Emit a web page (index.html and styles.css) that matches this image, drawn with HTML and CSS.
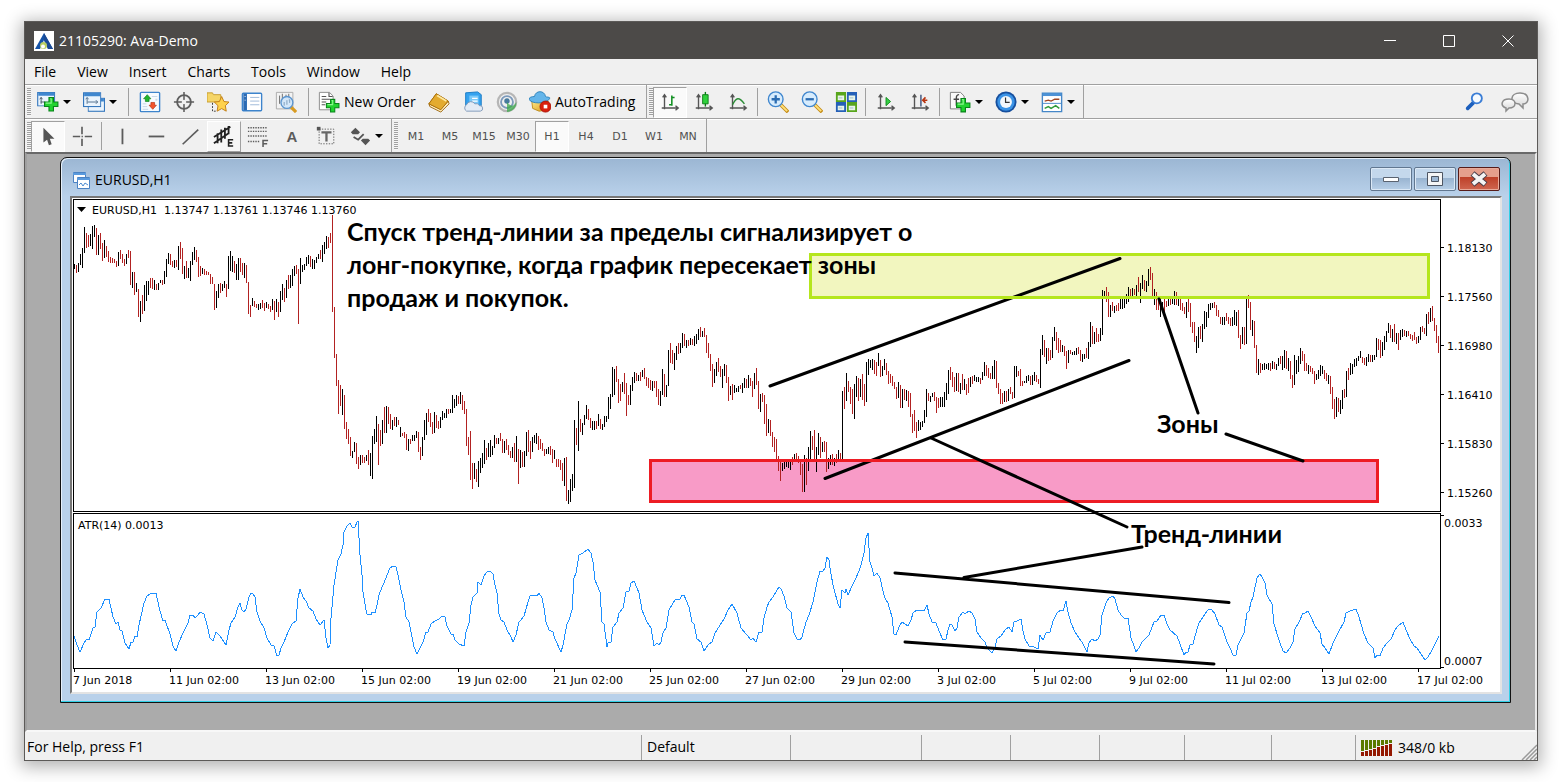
FILE: index.html
```html
<!DOCTYPE html>
<html lang="en">
<head>
<meta charset="utf-8">
<title>21105290: Ava-Demo</title>
<link rel="stylesheet" href="styles.css">
</head>
<body>
<svg class="defs" aria-hidden="true">
  <defs>
    <linearGradient id="gGold" x1="0" y1="0" x2="1" y2="1"><stop offset="0" stop-color="#ffe98a"/><stop offset="1" stop-color="#d99a17"/></linearGradient>
    <linearGradient id="gWhite" x1="0" y1="0" x2="0" y2="1"><stop offset="0" stop-color="#ffffff"/><stop offset="1" stop-color="#d5d5d5"/></linearGradient>
    <symbol id="plus" viewBox="0 0 14 14"><path d="M5 1h4v4h4v4H9v4H5V9H1V5h4z" fill="#22d32f" stroke="#08851a"/><path d="M6 2h1v4H2" fill="none" stroke="#8df58f"/></symbol>
    <symbol id="axes" viewBox="0 0 24 24"><path d="M6 20V5M3 18.500h17M4 7l2-3 2 3M18 16l3 2.500-3 2.500" fill="none" stroke="#555" stroke-width="1.500"/></symbol>
    <symbol id="win" viewBox="0 0 16 13"><rect x=".5" y=".5" width="15" height="12" fill="#eaf4fd" stroke="#3577bd"/><path d="M1 2h14" stroke="#3f87cf" stroke-width="3"/></symbol>
  </defs>
</svg>

<div class="window">
  <header class="titlebar">
    <svg class="app-icon" viewBox="0 0 20 20"><path fill="#fff" d="M0 0h20v20H0z"/><path fill="#1553a8" d="M10 2l9 16h-5L10 9l-4 9H1z"/><path fill="#1b4a94" d="M10 2l9 16h-5L10 9z"/><circle cx="9.500" cy="14.500" r="3.500" fill="#b8cf62"/><circle cx="9" cy="15.500" r="2" fill="#fff"/></svg>
    <h1 class="title">21105290: Ava-Demo</h1>
    <button class="caption" aria-label="Minimize"><svg viewBox="0 0 12 12"><path d="M0 5.500h12"/></svg></button>
    <button class="caption" aria-label="Maximize"><svg viewBox="0 0 12 12"><path d="M.5.500h11v11H.5z"/></svg></button>
    <button class="caption" aria-label="Close"><svg viewBox="0 0 12 12"><path d="M.5.500l11 11m0-11l-11 11"/></svg></button>
  </header>

  <nav class="menubar">
    <button>File</button><button>View</button><button>Insert</button><button>Charts</button><button>Tools</button><button>Window</button><button>Help</button>
  </nav>

  <div class="toolrow">
    <div class="toolbar first">
      <span class="grip"></span>
      <button class="tool split" aria-label="New chart"><svg class="icon" viewBox="0 0 24 24"><use href="#win" x="0" y="1" width="20" height="16"/><path d="M4.500 14V7m-1.500 2l1.500-2 1.500 2M4 12h5" fill="none" stroke="#456"/><use href="#plus" x="7" y="6" width="17" height="17"/></svg><i class="drop"></i></button>
      <button class="tool split" aria-label="Profiles"><svg class="icon" viewBox="0 0 24 24"><use href="#win" x="5" y="7" width="19" height="16"/><use href="#win" x="0" y="1" width="20" height="17"/><path d="M4.500 14V8M3 9l1.500-2L6 9M5 12h11m-2-2l2 2-2 2" fill="none" stroke="#4c6a88"/></svg><i class="drop"></i></button>
      <span class="sep"></span>
      <button class="tool" aria-label="Market watch"><svg class="icon" viewBox="0 0 24 24"><rect x="1.500" y="1.500" width="21" height="21" rx="1" fill="#f6fbff" stroke="#3d84cc" stroke-width="1.500"/><path d="M14 6h6M4 14h4m10-4h2M4 17h5m9-8h2M4 20h6" stroke="#c3d4e4"/><path d="M9 4l4 4.500h-2v3H7v-3H5z" fill="#20b52c" stroke="#0c7a17" stroke-width=".7"/><path d="M15 20l-4-4.500h2v-3h4v3h2z" fill="#f4542b" stroke="#b22c0c" stroke-width=".7"/></svg></button>
      <button class="tool" aria-label="Data window"><svg class="icon" viewBox="0 0 24 24" fill="none" stroke="#5e5e5e"><circle cx="12" cy="12" r="7.500" stroke-width="2"/><path d="M12 1v22M1 12h22" stroke-width="1.700"/><circle cx="12" cy="12" r="2.500" fill="#f0f0f0" stroke="none"/></svg></button>
      <button class="tool" aria-label="Navigator"><svg class="icon" viewBox="0 0 24 24"><path d="M0 2h6l1 2h8v8H0z" fill="#f5d567" stroke="#c59a2c"/><path d="M6 13v9h5" fill="none" stroke="#333" stroke-dasharray="2 1.500"/><path d="M16 6l2.500 5.500 5.500.600-4 3.900 1 6-5-2.800L11 22l1-6-4-3.900 5.500-.600z" fill="#ffd24d" stroke="#c07a10"/></svg></button>
      <button class="tool" aria-label="Terminal"><svg class="icon" viewBox="0 0 24 24"><rect x="1.500" y="2.500" width="21" height="19" rx="1" fill="#fff" stroke="#3d84cc" stroke-width="1.500"/><path d="M4.500 3v18" stroke="#2c6bb4" stroke-width="4"/><path d="M10 7h10M10 11h10M10 15h10" stroke="#9ab6d6"/><path d="M4 6h1M4 10h1" stroke="#fff"/></svg></button>
      <button class="tool" aria-label="Strategy tester"><svg class="icon" viewBox="0 0 24 24"><path d="M1.500 1.500h18v18h-18z" fill="#f3f3f3" stroke="#aaa"/><path d="M5 5v9m3-11v9m7-9v8m-3-7v4" stroke="#666"/><path d="M17 17l6 6" stroke="#d89b22" stroke-width="3.500"/><circle cx="13" cy="12.500" r="6.500" fill="#cfe6fb" fill-opacity=".9" stroke="#5b95cf" stroke-width="1.500"/><path d="M10 12v4m3-6v5m3-6v4" stroke="#7b99b8"/></svg></button>
      <span class="sep"></span>
      <button class="tool wide order"><svg class="icon" viewBox="0 0 24 24"><path d="M1.500 1.500h11l4 4v15h-15z" fill="#fff" stroke="#888"/><path d="M12 2v4h4M4 6h5M4 9h9M4 12h5M4 15h4" fill="none" stroke="#555" stroke-width="1.200"/><use href="#plus" x="8" y="8" width="16" height="16"/></svg>New Order</button>
      <button class="tool" aria-label="MetaEditor"><svg class="icon" viewBox="0 0 24 24"><path d="M1 14L9 3l13 8-8 10z" fill="url(#gGold)" stroke="#a86f0a"/><path d="M1 14l1 3 12 6 9-9-1-3-8 9z" fill="#fff0c2" stroke="#9b640a"/><path d="M1 14l13 6.500 8-9.500L9 3z" fill="#e3ab2f" stroke="#a86f0a"/><path d="M10 5l10 6" stroke="#ffeaa0" stroke-width="2"/></svg></button>
      <button class="tool" aria-label="VPS"><svg class="icon" viewBox="0 0 24 24"><path d="M4 2l13-1 4 3v12H4z" fill="#36a3ef" stroke="#1678c4"/><path d="M8 5h10v9H8z" fill="#7ccaf9"/><path d="M11 8h6m-6 3h6" stroke="#fff" stroke-width="1.500"/><path d="M5 22a4 4 0 010-7 5 5 0 019-1 4 4 0 015 2 3 3 0 011 6z" fill="#e3ebf5" stroke="#7f97b7"/></svg></button>
      <button class="tool" aria-label="Signals"><svg class="icon" viewBox="0 0 24 24" fill="none"><circle cx="12" cy="12" r="10" stroke="#b6b6b6" stroke-width="2.500"/><circle cx="12" cy="12" r="6.500" stroke="#7d9abb" stroke-width="2"/><circle cx="12" cy="11" r="3" fill="#477a9e"/><path d="M12 12v11c7-1 11-6 10-11-2 5-6 6-10 0z" fill="#3ba84a" fill-opacity=".75"/></svg></button>
      <button class="tool wide auto"><svg class="icon" viewBox="0 0 24 24"><path d="M3 11h18l-3 10-7 1-7-3z" fill="url(#gGold)" stroke="#bc8b1f"/><path d="M0 9c2 5 18 6 23-1-1-2-4-1-5-2-1-7-11-7-12 0-3 0-6 1-6 3z" fill="#64b5ea" stroke="#287fb9"/><circle cx="18" cy="17" r="6" fill="#d9200e" stroke="#a91205"/><path d="M16 15h4v4h-4z" fill="#fff"/></svg>AutoTrading</button>
    </div>
    <div class="toolbar">
      <span class="grip"></span>
      <button class="tool pressed" aria-label="Bar chart"><svg class="icon" viewBox="0 0 24 24"><use href="#axes"/><path d="M14 5v11m0-9h3m-6 8h3" fill="none" stroke="#119022" stroke-width="1.700"/></svg></button>
      <button class="tool" aria-label="Candlesticks"><svg class="icon" viewBox="0 0 24 24"><use href="#axes"/><path d="M13.500 1v16" stroke="#0d7b18" stroke-width="1.500"/><path d="M10.500 4h6v10h-6z" fill="#2fd23c" stroke="#0d7b18"/></svg></button>
      <button class="tool" aria-label="Line chart"><svg class="icon" viewBox="0 0 24 24"><use href="#axes"/><path d="M6 15c4-8 7-9 13-1" fill="none" stroke="#2b8c36" stroke-width="1.500"/></svg></button>
      <span class="sep"></span>
      <button class="tool" aria-label="Zoom in"><svg class="icon" viewBox="0 0 24 24"><path d="M15 15l8 8" stroke="#c58c16" stroke-width="4"/><path d="M15 15l7 7" stroke="#ffe07a" stroke-width="2"/><circle cx="9.500" cy="9" r="8" fill="#d7ecfd" stroke="#3f86ce" stroke-width="1.500"/><path d="M9.500 4.500v9m-4.500-4.500h9" stroke="#2b6cb2" stroke-width="2.500"/></svg></button>
      <button class="tool" aria-label="Zoom out"><svg class="icon" viewBox="0 0 24 24"><path d="M15 15l8 8" stroke="#c58c16" stroke-width="4"/><path d="M15 15l7 7" stroke="#ffe07a" stroke-width="2"/><circle cx="9.500" cy="9" r="8" fill="#d7ecfd" stroke="#3f86ce" stroke-width="1.500"/><path d="M5 9h9" stroke="#2b6cb2" stroke-width="2.500"/></svg></button>
      <button class="tool" aria-label="Tile windows"><svg class="icon" viewBox="0 0 24 24"><path d="M1 1h11v11H1zm12 11h11v11H13z" fill="#58a51c"/><path d="M13 1h11v11H13zM1 12h11v11H1z" fill="#2560b8"/><path d="M3 5h7v5H3zm12 0h7v5h-7zM3 16h7v5H3zm12 0h7v5h-7z" fill="#e9f5e9"/><path d="M4 7.500h4m8 0h4M4 18.500h4m8 0h4" stroke="#9bb8c8"/></svg></button>
      <span class="sep"></span>
      <button class="tool" aria-label="Auto scroll"><svg class="icon" viewBox="0 0 24 24"><use href="#axes"/><path d="M12 7v9l5-4.500z" fill="#35cf43" stroke="#0f8a1c"/></svg></button>
      <button class="tool" aria-label="Chart shift"><svg class="icon" viewBox="0 0 24 24"><use href="#axes"/><path d="M13 4v13" stroke="#4d5f86" stroke-width="1.700"/><path d="M20 10h-5m3-3l-3 3 3 3" fill="none" stroke="#b8330f" stroke-width="1.700"/></svg></button>
      <span class="sep"></span>
      <button class="tool split" aria-label="Indicators"><svg class="icon" viewBox="0 0 24 24"><path d="M1.500 1.500h11l4 4v14h-15z" fill="#fafafa" stroke="#777"/><path d="M11 4C8 4 8 6 8 9v7M5 9h6" fill="none" stroke="#444" stroke-width="1.500"/><use href="#plus" x="7" y="7" width="17" height="17"/></svg><i class="drop"></i></button>
      <button class="tool split" aria-label="Periods"><svg class="icon" viewBox="0 0 24 24"><circle cx="12" cy="12" r="11.500" fill="#164f9e"/><circle cx="12" cy="12" r="9.500" fill="#3b93e6"/><circle cx="12" cy="12" r="6.500" fill="#f4f8fc"/><path d="M11.500 7v5.500H16" fill="none" stroke="#333" stroke-width="1.300"/></svg><i class="drop"></i></button>
      <button class="tool split" aria-label="Templates"><svg class="icon" viewBox="0 0 24 24"><path d="M1.500 2.500h21v20h-21z" fill="#fff" stroke="#4587c8" stroke-width="1.500"/><path d="M2 4h20" stroke="#4d92d6" stroke-width="3"/><path d="M4 11l4-1 3 1 4-2h5" fill="none" stroke="#a04422" stroke-width="1.500"/><path d="M2 13.500h20" stroke="#4587c8"/><path d="M4 19l4-2 3 2 5-3 4 3" fill="none" stroke="#2f9a38" stroke-width="1.500"/></svg><i class="drop"></i></button>
    </div>
    <div class="corner">
      <button class="tool" aria-label="Search"><svg class="icon" viewBox="0 0 24 24"><path d="M10 13l-6 6" stroke="#1c5fbd" stroke-width="4" stroke-linecap="round"/><circle cx="14" cy="8" r="5.500" fill="#f6fbff" stroke="#3a7dd6" stroke-width="2"/></svg></button>
      <button class="tool chat" aria-label="Chat"><svg class="bubble" viewBox="0 0 28 22"><path d="M19 2c10 0 10 11 3 11v4l-4-4C8 12 9 2 19 2z" fill="url(#gWhite)" stroke="#8c8c8c" stroke-width="1.500"/><path d="M8 8c8 0 8 9 0 9l-3 3v-3C-1 15 0 8 8 8z" fill="url(#gWhite)" stroke="#8c8c8c" stroke-width="1.500"/></svg></button>
    </div>
  </div>

  <div class="toolrow">
    <div class="toolbar">
      <span class="grip"></span>
      <button class="tool pressed" aria-label="Cursor"><svg class="icon" viewBox="0 0 24 24"><path d="M7 3v16l4-3 2 6 3-1-2-6h5z" fill="#555"/></svg></button>
      <button class="tool" aria-label="Crosshair"><svg class="icon" viewBox="0 0 24 24"><path d="M12 2v8m0 5v8M2 12.500h8m5 0h8" stroke="#5c5c5c" stroke-width="1.800"/><path d="M11.500 12.500h1.500" stroke="#5c5c5c" stroke-width="1.500"/></svg></button>
      <span class="sep"></span>
      <button class="tool" aria-label="Vertical line"><svg class="icon" viewBox="0 0 24 24"><path d="M12.500 4v17" stroke="#5c5c5c" stroke-width="2"/></svg></button>
      <button class="tool" aria-label="Horizontal line"><svg class="icon" viewBox="0 0 24 24"><path d="M4 12.500h17" stroke="#5c5c5c" stroke-width="2"/></svg></button>
      <button class="tool" aria-label="Trendline"><svg class="icon" viewBox="0 0 24 24"><path d="M4 21L21 5" stroke="#5c5c5c" stroke-width="1.800"/></svg></button>
      <button class="tool raised" aria-label="Equidistant channel"><svg class="icon" viewBox="0 0 24 24"><path d="M1 13L19 2M1 20l16-11M5 9v11M9 5v14M13 3v12M17 1v9" fill="none" stroke="#222" stroke-width="2"/><path d="M22 16h-5v7h5m-5-3.500h4" fill="none" stroke="#222" stroke-width="1.700"/></svg></button>
      <button class="tool" aria-label="Fibonacci"><svg class="icon" viewBox="0 0 24 24"><path d="M1 3h21M1 7h21M1 12h21M1 18h13" stroke="#5c5c5c" stroke-width="1.500" stroke-dasharray="1.500 1.200"/><path d="M17.500 24v-7H23m-5.500 3.500H22" fill="none" stroke="#5c5c5c" stroke-width="1.700"/></svg></button>
      <button class="tool letter" aria-label="Text">A</button>
      <button class="tool" aria-label="Text label"><svg class="icon" viewBox="0 0 24 24"><path d="M4.500 4.500h16v16h-16z" fill="none" stroke="#5c5c5c" stroke-dasharray="1.500 1.500"/><path d="M7 8h11M12.500 8v10" stroke="#666" stroke-width="2.500"/><path d="M2 2h4v4H2z" fill="#555"/></svg></button>
      <button class="tool split" aria-label="Arrows"><svg class="icon" viewBox="0 0 24 24"><path d="M7 3l5 5-2 2H4L2 8zM18 22l-5-5 2-2h6l2 2z" fill="#555"/><path d="M5 13l5 3 6-6" fill="none" stroke="#555" stroke-width="2"/></svg><i class="drop"></i></button>
    </div>
    <div class="toolbar frames">
      <span class="grip"></span>
      <button class="tool tf">M1</button><button class="tool tf">M5</button><button class="tool tf">M15</button><button class="tool tf">M30</button><button class="tool tf pressed">H1</button><button class="tool tf">H4</button><button class="tool tf">D1</button><button class="tool tf">W1</button><button class="tool tf">MN</button>
    </div>
  </div>

  <main class="workspace">
    <section class="child">
      <header class="child-bar">
        <svg class="child-icon" viewBox="0 0 18 18"><path d="M1.500 1.500h12v10h-12z" fill="#fff" stroke="#4b83c4"/><path d="M1 3h13" stroke="#5a9add" stroke-width="2"/><path d="M5.500 6.500h12v11h-12z" fill="#fff" stroke="#4b83c4"/><path d="M5 8h13" stroke="#5a9add" stroke-width="2"/><path d="M7 14l2-2 2 3 2-3 3 2" fill="none" stroke="#4c8bd0"/></svg>
        <h2 class="child-title">EURUSD,H1</h2>
        <button class="glass" aria-label="Minimize chart"><svg viewBox="0 0 20 16"><path d="M2.500 6.500h15v4h-15z" fill="#fff" stroke="#5a6370"/></svg></button>
        <button class="glass" aria-label="Restore chart"><svg viewBox="0 0 20 16"><path d="M2.500 1.500h15v13h-15z" fill="#f6f6f6" stroke="#4e5663"/><path d="M6.500 5.500h7v5h-7z" fill="#9db7d3" stroke="#4e5663"/></svg></button>
        <button class="glass close" aria-label="Close chart"><svg viewBox="0 0 20 16"><path d="M3.500 2.500l13 11m0-11l-13 11" stroke="#4b3f4a" stroke-width="6"/><path d="M4 3l12 10m0-10L4 13" stroke="#f4f4f4" stroke-width="4"/></svg></button>
      </header>
      <div class="client">
        <svg class="chart" viewBox="72 198 1428 494" role="img" aria-label="EURUSD H1 price chart with ATR(14)">
          <rect x="810" y="254" width="619" height="44" fill="#f2f6bf"/>
          <rect x="650" y="460" width="728" height="42" fill="#f89bc7"/>
          <g class="panes"><rect x="73.500" y="199.500" width="1367" height="312"/><rect x="73.500" y="513.500" width="1367" height="155"/></g>
          <path id="up" class="bar-up"/><path id="down" class="bar-down"/>
          <path id="atr" class="atr"/>
          <path id="ticks" class="ticks"/>
          <path d="M77 207h9l-4.500 5z"/>
          <g class="label"><text x="92" y="214">EURUSD,H1</text><text x="164" y="214">1.13747 1.13761 1.13746 1.13760</text><text x="78" y="529">ATR(14) 0.0013</text><text x="1444" y="527">0.0033</text><text x="1444" y="665">0.0007</text></g>
          <g id="prices" class="label"></g><g id="dates" class="label"></g>
          <g class="trend"><path d="M770 386L1120 258.500M825 478.500L1129 360.500"/></g>
          <rect x="810.500" y="254.500" width="618" height="43" fill="none" stroke="#b5e61d" stroke-width="3"/>
          <rect x="650.500" y="460.500" width="727" height="41" fill="none" stroke="#ed1c24" stroke-width="3"/>
          <g class="trend"><path d="M1159 299L1198 413M1226 434L1303 461M931 438L1127 527M1142 547L964 577.500M895 573L1229 602.500M905 642L1214 664"/></g>
          <g class="note"><text x="347" y="241">Спуск тренд-линии за пределы сигнализирует о</text><text x="347" y="274">лонг-покупке, когда график пересекает зоны</text><text x="347" y="307">продаж и покупок.</text><text x="1157" y="433">Зоны</text><text x="1131" y="543">Тренд-линии</text></g>
        </svg>
      </div>
    </section>
  </main>

  <footer class="status">
    <span>For Help, press F1</span><span>Default</span><span></span><span></span><span></span><span></span><span></span><span></span>
    <span class="traffic"><svg class="meter" viewBox="0 0 32 16"><path d="M1.500 0v11M5.500 0v10M9.500 0v9M13.500 0v8M17.500 0v6M21.500 0v5M25.500 0v4M29.500 0v3" stroke="#5b7a00" stroke-width="3"/><path d="M1.500 16v-4M5.500 16v-5M9.500 16v-6M13.500 16v-7M17.500 16v-9M21.500 16v-10M25.500 16v-11M29.500 16v-12" stroke="#941800" stroke-width="3"/></svg>348/0 kb<svg class="resize" viewBox="0 0 16 16"><path d="M1 16L16 1M5 16L16 5M9 16l7-7M13 16l3-3" stroke="#9a9a9a" stroke-width="1.500"/></svg></span>
  </footer>
</div>
<script src="chart.js"></script>
</body>
</html>
```
FILE: styles.css
```css
* { box-sizing: border-box; }
body { margin: 0; padding: 21px 22px 21px 24px; background: #fff; font: 14px/20px "Open Sans", "Noto Sans", sans-serif; color: #000; }
button { margin: 0; padding: 0; border: 0; background: none; font: inherit; color: inherit; }
h1, h2 { margin: 0; font-size: 14px; font-weight: 400; }
.defs { position: absolute; width: 0; height: 0; }

.window { border: 1px solid #5c5a58; background: #f0f0f0; box-shadow: 0 3px 16px 3px rgba(0, 0, 0, .3); }

.titlebar { display: flex; align-items: center; height: 37px; padding-left: 9px; background: #4c4a48; color: #fff; }
.app-icon { width: 20px; height: 20px; margin-right: 5px; }
.title { flex: 1; }
.caption { display: grid; place-items: center; width: 59px; height: 37px; }
.caption svg { width: 12px; height: 12px; fill: none; stroke: #fff; }

.menubar { display: flex; gap: 21px; height: 25px; padding: 0 9px; align-items: center; }

.toolrow { display: flex; height: 34px; border-top: 1px solid #a0a0a0; box-shadow: inset 0 1px #fff; }
.toolbar { display: flex; align-items: center; padding: 1px 2px 0 2px; border-right: 1px solid #a0a0a0; }
.toolbar.first { padding-right: 0; }
.grip { width: 4px; height: 28px; background: repeating-linear-gradient(#a0a0a0 0 1px, #f6f6f6 1px 2px); }
.tool { display: flex; align-items: center; justify-content: center; width: 34px; height: 31px; }
.icon { flex: none; width: 22px; height: 22px; }
.split { width: 46px; padding-left: 6px; justify-content: flex-start; }
.drop { margin-left: 4px; border: 4px solid transparent; border-top-color: #000; border-bottom: 0; }
.sep { width: 6px; height: 28px; background: linear-gradient(#a0a0a0, #a0a0a0) 2px 0 / 1px 100% no-repeat; }
.first .sep { width: 10px; background-position: 5px 0; }
.wide { justify-content: flex-start; gap: 4px; padding-left: 5px; }
.order { width: 109px; }
.auto { width: 122px; }
.frames .grip { margin-right: 1px; }
.frames { padding-right: 1px; }
.pressed { background: #fafafa; border: 1px solid; border-color: #a0a0a0 #fff #fff #a0a0a0; }
.raised { background: #f6f6f6; border: 1px solid; border-color: #fff #a0a0a0 #a0a0a0 #fff; }
.letter { font: bold 15px "Liberation Sans", sans-serif; color: #5c5c5c; }
.tf { font: 11px "DejaVu Sans", "Noto Sans", sans-serif; color: #505050; }
.corner { display: flex; align-items: center; gap: 6px; margin-left: auto; padding-right: 5px; }
.bubble { width: 28px; height: 22px; }

.workspace { padding: 3px 24px 27px 33px; background: #ababab; border: solid; border-width: 2px; border-color: #696969 #e8e8e8 #f8f8f8 #a0a0a0; }
.child { padding: 0 8px 8px 9px; border: 1px solid #111; border-radius: 7px 7px 0 0; background: linear-gradient(#9bb6d3, #b9d1ea 38px); box-shadow: inset -1px -1px #31d0e6, inset 1px 1px #e6f0fa; }
.child-bar { display: flex; align-items: center; gap: 2px; height: 38px; padding: 6px 2px 0; }
.child-icon { width: 18px; height: 18px; margin-right: 3px; }
.child-title { flex: 1; }
.glass { display: grid; place-items: center; width: 42px; height: 24px; margin-bottom: 2px; border: 1px solid #617790; border-radius: 2px; background: linear-gradient(#c4d8ec 45%, #98b3d0 45%, #b8d0e8); box-shadow: inset 0 0 0 1px #dce9f6; }
.glass svg { width: 20px; height: 16px; }
.glass.close { border-color: #571c19; background: linear-gradient(#e59f8c 40%, #bd3f27 40%, #cf6650); box-shadow: inset 0 0 0 1px #e8ab9b; }
.client { background: #fff; border: 2px solid; border-color: #777 #e3e3e3 #e3e3e3 #777; }
.chart { display: block; width: 100%; height: auto; }
.panes rect { fill: none; stroke: #000; }
.bar-up, .bar-down, .atr, .ticks { fill: none; shape-rendering: crispEdges; }
.bar-up, .ticks { stroke: #000; }
.bar-down { stroke: #b22222; }
.atr { stroke: #1e90ff; }
.trend path { fill: none; stroke: #000; stroke-width: 3px; stroke-linecap: round; }
.label { font: 11px "DejaVu Sans", "Noto Sans", sans-serif; }
.note { font: bold 25px "Lato", "Open Sans", sans-serif; }

.status { display: grid; grid-template-columns: 1fr 149px 131px 89px 89px 85px 87px 84px 181px; height: 28px; padding-top: 3px; }
.status span { padding: 2px; border-right: 1px solid #a0a0a0; }
.status span:nth-child(n+2) { padding-left: 5px; }
.status .traffic { display: flex; align-items: center; gap: 5px; padding: 0 0 0 5px; border: 0; }
.meter { width: 32px; height: 16px; }
.resize { width: 16px; height: 16px; margin-left: auto; align-self: flex-end; }
```
FILE: chart.js
```js
// One entry per bar, "high+low" for a rising bar and "high-low" for a falling one.
const bars = `
264+269 265-273 263+272 254+265 248+268 227+253 233-248 235-247 234+246 226+249 225+237 228-255 235+255 233-249 243-261 240+258 246-257 251-262 257-263 258-263
259-263 261-267 252+266 250-259 254-263 259-266 254+264 250-258 251-285 272+288 272-295 283+292 289-317 301+322 295-314 285+311 281+301 281+295 278-288 278-289
280+290 284-290 283+290 280+283 280-285 271+284 259+277 253+264 254-265 261-267 260+268 260-267 246+270 242-259 248-274 266+279 261-278 268+278 261+281 252+265
247+260 250-262 257-277 266-276 268+274 269-275 271-275 272-275 274-284 277-284 284-310 291+308 284+298 283-293 284+291 281+288 284-297 256+289 251+271 256+272
261-273 264+280 258+280 258-272 263-275 263+278 265-283 282-314 305-317 298+306 301-307 304-308 304+310 303+309 300-308 303-311 302+308 304-309 306-312 299+310
301-320 299+312 302-317 291+312 284+300 288-302 280+298 275-289 275+288 269+286 266+276 265-274 269-324 258+284 265+272 264+270 257+266 255+264 256-267 259+269
260+269 257+263 254+259 250-259 245+262 242+254 236+249 237-248 233-243 215-312 307-358 354-386 380-414 385-406 389+415 395-429 422-439 429-444 437-456 451+458
442+452 443-464 457-469 455+465 455-463 457-463 455+461 450-465 453+476 436+479 429+444 416+442 424-465 430-446 420+444 407-433 406+433 407-424 414-429 420+430
417-426 417+427 420-425 427+437 433-436 432-438 434-450 439+451 439-444 435+441 435+441 431+438 432-452 447-460 437+456 420+440 413+435 409-422 413-427 422-434
412+433 415-428 421-429 417+428 411+420 413+418 409+418 409-414 409+413 395+413 399+408 395+406 396-404 392+404 395-410 401-414 409-446 437-455 431-480 463-489
463+479 469-482 461+487 458+473 453+468 440+464 448-460 443+457 440+457 446+455 435+448 438-444 438+444 433-441 439-453 441+453 439-450 445-455 451-458 447+458
443-462 436+462 449-484 450+468 452-467 451+467 432+456 430-452 441-459 437+452 435+443 433+444 436-450 439-449 443-451 449-456 449+454 447+454 446-455 449-463
450+459 459-467 459-467 460-470 463-481 458+486 457-501 490+504 479+502 474+491 420+488 428-445 401+451 419-432 423+435 415+425 405+419 409-420 418-428 421+430
421+430 421-429 414+426 419-429 424+430 416+427 416+422 397+419 394+409 367+397 369+395 366-382 379-403 384-401 382+392 373-394 383-416 395-405 385+405 377+391
372+383 373-381 375+381 372-381 370+377 368-379 377-386 378-388 380-390 381+391 381-388 381-397 389-405 391+406 369+395 374-397 385+397 350+386 343-363 350-364
353+370 346+360 343-354 343+353 333+348 334-346 340+348 340-346 338+345 339-345 336+346 334+344 329+340 327-337 331+337 328-337 335-353 343-358 354-371 364-387
369+383 362+376 358-372 366-377 369+388 364+376 365-383 377-401 386+395 384-400 385+393 388+392 386+392 385-389 383+393 378+388 379-388 375+388 378-386 381-397
373+389 368-385 381-409 394+412 393-402 395-424 404-436 419+433 420-436 432-447 437-452 439-460 456-471 460-481 463+471 462+469 460+467 461+468 461+470 457-465
454+462 453-460 456-463 460-475 464-492 455+492 458-485 447+471 431+460 436-450 430-459 447+472 433+455 437-458 442+452 441-452 442-472 458+469 455+465 454-465
458+466 454-463 450+460 453-460 391+460 387-409 373+401 381-392 387-404 389-414 384+419 376+397 378-401 379+397 374-400 384-406 362+402 359+375 360+368 359+370
360-374 362-376 353+366 360-377 366+376 359+370 363-375 371-384 374-383 376-386 382-389 387-399 382+398 385-408 389+408 389-400 390+401 391-407 393-417 414-433
410-431 422-438 420+431 422+430 421+427 410+423 389+417 393-401 396+402 393+397 392-401 397-413 398-408 397+407 397+407 392+407 383+400 370+394 367-380 372-387
377-392 373+391 373-392 383+394 374-390 379+390 384-395 378-393 377+387 376-384 375+381 377+382 377+382 378-384 372+380 362+376 365-376 368-378 373-379 366+379
360+379 361-388 383-394 389-404 393-404 391+402 391-402 389+401 387-394 392-399 366+398 366+377 371-376 369-386 381-386 381+383 376+383 375+381 376-385 375+385
372+381 375-382 379-384 349+388 335+355 340-357 348+364 348-361 350-360 337+358 327+341 332-350 338-353 340-352 345+352 346-356 351-369 350+363 350-354 352+355
351+355 348+355 347-354 350-361 354+362 354+359 348-358 342+359 322+347 326-344 332+344 328-342 334-342 328+341 290+335 291+298 287-302 292-317 305+317 302-311
306+313 305-311 303-311 299+309 298+309 298+308 294+304 287+302 289-296 288+297 289-295 285+296 277-292 283+303 275+289 280-291 281+292 269+286 267-280 273-296
289+305 292-310 298-310 299+317 302+310 299-313 301-307 299+306 299-305 298+304 291+305 292-305 299+306 299-310 303-311 307-314 302+318 299-312 303-327 322-333
322-342 336+353 327+348 326-339 324+342 311+329 312+327 304+318 303+310 303+308 302-308 305-316 310-317 317-324 317+325 317+325 313-321 317-324 318-326 317+326
310+325 312+326 310-338 335-349 327+344 327-345 298+344 295-308 302-330 320+336 321-348 345-373 359+375 363-373 364+370 363+370 364+369 363+370 363-371 361+369
362-369 364+370 358+366 356-364 356+370 350+368 351-369 358+371 361-379 375-388 355+385 360+374 356+372 348+364 351-361 354-371 363-371 365+374 366-372 368-374
371-384 374+380 370+379 365+376 366+374 370-379 373-381 375+384 376-394 387-409 399-419 397+417 398-412 400+414 390+409 389-398 371+397 368-380 363+375 364+374
359+367 358+366 356+361 351+358 357-363 358-365 357+366 354+362 355-362 355+362 355+360 338+357 339-350 340-358 342+356 336+350 331+342 323+333 325-338 329+342
324-342 333+344 333-350 330+340 329+337 330-336 331+337 331-336 334-339 335-341 332-340 337-344 336+343 327+340 326-332 328-334 314+336 312-324 308+322 306-321
318-331 325-343 336-353`.trim().split(/\s+/);

const atr = `74,636 77,645 80,652 84,643 87,639 89,640 93,628 95,627 97,612 101,608 105,599 109,599 113,617 116,624 118,622 120,630 122,631 125,643 129,649 131,642 133,642 135,636 137,637 139,625 144,603 147,596 152,593 156,593 159,607 163,621 165,620 170,634 173,646 176,651 179,642 183,633 188,623 190,615 193,615 195,618 198,615 200,612 204,614 207,625 210,638 213,641 216,632 220,636 226,645 229,630 231,623 235,617 238,607 240,603 242,610 244,612 246,609 249,597 251,593 253,594 255,597 257,612 260,621 264,628 267,638 271,645 274,646 277,656 279,655 281,648 284,642 288,632 292,624 296,621 298,598 300,589 303,597 306,601 309,608 313,611 316,619 320,625 324,620 326,638 328,648 330,645 331,618 334,585 338,560 341,554 343,545 344,532 347,526 350,523 352,527 355,527 357,522 358,521 360,555 362,575 363,592 366,610 367,614 371,615 372,612 375,613 377,605 379,595 382,587 384,583 387,575 390,568 393,566 396,567 398,575 401,590 404,602 406,617 409,622 411,632 414,647 417,654 419,650 423,642 426,632 428,632 431,624 435,621 439,619 442,616 445,617 447,626 451,634 453,634 455,640 459,644 464,646 466,632 469,623 471,605 473,597 477,593 478,582 481,585 484,576 487,572 490,571 493,574 495,585 497,593 499,614 501,620 504,622 507,630 511,637 513,642 516,635 519,622 521,620 524,616 528,602 530,596 533,595 537,596 539,593 542,598 544,608 546,622 549,630 553,632 555,639
561,652 563,645 567,624 569,620 572,610 574,578 576,573 579,555 583,553 588,549 591,553 593,562 595,580 600,592 602,622 604,624 607,647 608,643 611,642 613,627 617,622 619,613 623,608 626,592 629,591 631,583 634,581 637,588 639,593 642,610 647,622 651,628 654,646 657,643 659,645 661,642 663,633 666,628 669,610 673,603 676,599 680,599 682,595 684,595 689,607 692,622 694,624 697,639 701,642 704,651 708,645 712,642 715,633 722,622 724,619 728,610 732,604 737,613 741,628 746,634 748,636 751,640 753,638 756,642 759,632 762,632 764,618 767,607 769,602 773,597 777,590 779,587 781,589 784,596 787,608 791,612 794,633 797,639 800,640 802,637 806,622 809,615 813,602 817,582 820,571 823,571 825,568 827,557 829,560 830,568 833,585 838,604 840,608 842,590 845,593 846,589 848,595 852,586 855,580 859,571 861,565 864,553 866,538 868,533 870,562 872,568 874,576 877,573 880,578 883,591 885,598 888,603 892,617 894,634 896,635 899,627 902,622 905,624 908,626 911,620 913,613 917,610 924,611 927,605 929,614 932,622 936,623 939,631 943,640 946,639 948,630 950,624 952,625 955,631 957,628 959,617 963,612 965,614 969,611 972,613 975,619 977,632 981,638 985,642 987,648 992,653 995,647 997,639 1001,636 1005,630 1009,627 1012,632 1014,622 1017,621 1021,619 1023,631 1025,639 1029,646 1034,647 1038,649 1040,635
1043,640 1046,633 1050,632 1053,621 1057,613 1061,610 1063,611 1066,601 1068,612 1071,623 1075,632 1079,638 1082,642 1087,652 1089,643 1092,639 1095,641 1098,639 1100,635 1102,615 1106,603 1109,598 1113,596 1115,599 1118,610 1121,615 1125,619 1128,618 1131,638 1134,646 1136,652 1139,648 1142,642 1149,635 1154,622 1157,621 1161,615 1164,615 1167,624 1170,630 1177,636 1180,644 1184,655 1186,652 1188,652 1190,645 1193,644 1195,636 1199,623 1203,617 1207,611 1209,609 1212,610 1215,614 1219,625 1222,627 1227,642 1230,648 1233,655 1236,655 1238,645 1244,633 1247,613 1249,611 1251,602 1253,597 1257,578 1260,574 1262,577 1265,583 1267,595 1272,604 1274,624 1278,637 1280,643 1283,651 1286,653 1290,648 1293,642 1295,629 1299,622 1303,613 1305,613 1308,611 1311,617 1315,626 1320,633 1322,644 1325,648 1329,654 1333,643 1338,633 1344,622 1346,613 1350,611 1356,609 1359,617 1364,634 1368,643 1373,648 1375,658 1377,655 1380,656 1383,648 1387,643 1391,639 1395,630 1398,626 1403,622 1406,630 1410,639 1414,646 1417,648 1421,654 1425,660 1428,657 1431,652 1435,644 1439,636`;

const prices = ["1.18130", "1.17560", "1.16980", "1.16410", "1.15830", "1.15260"];
const dates = ["7 Jun 2018", "11 Jun 02:00", "13 Jun 02:00", "15 Jun 02:00", "19 Jun 02:00", "21 Jun 02:00", "25 Jun 02:00", "27 Jun 02:00", "29 Jun 02:00", "3 Jul 02:00", "5 Jul 02:00", "9 Jul 02:00", "11 Jul 02:00", "13 Jul 02:00", "17 Jul 02:00"];

const byId = (id) => document.getElementById(id);
let up = "", down = "", ticks = "M1441 515.5h3M1441 667.5h3";

bars.forEach((bar, i) => {
  const rising = bar.includes("+");
  const [high, low] = bar.split(/[+-]/);
  const stroke = `M${74.5 + i * 2} ${high}V${low}`;
  if (rising) up += stroke; else down += stroke;
});

function label(group, x, y, value) {
  const node = document.createElementNS("http://www.w3.org/2000/svg", "text");
  node.setAttribute("x", x);
  node.setAttribute("y", y);
  node.textContent = value;
  byId(group).append(node);
}
prices.forEach((value, i) => {
  const y = 247 + i * 49;
  ticks += `M1441 ${y + 0.5}h3`;
  label("prices", 1447, y + 5, value);
});
dates.forEach((value, i) => {
  const x = 74 + i * 96;
  ticks += `M${x + 0.5} 669v3`;
  label("dates", x - 1, 684, value);
});

byId("up").setAttribute("d", up);
byId("down").setAttribute("d", down);
byId("atr").setAttribute("d", "M" + atr.trim().split(/\s+/).join("L"));
byId("ticks").setAttribute("d", ticks);
```
